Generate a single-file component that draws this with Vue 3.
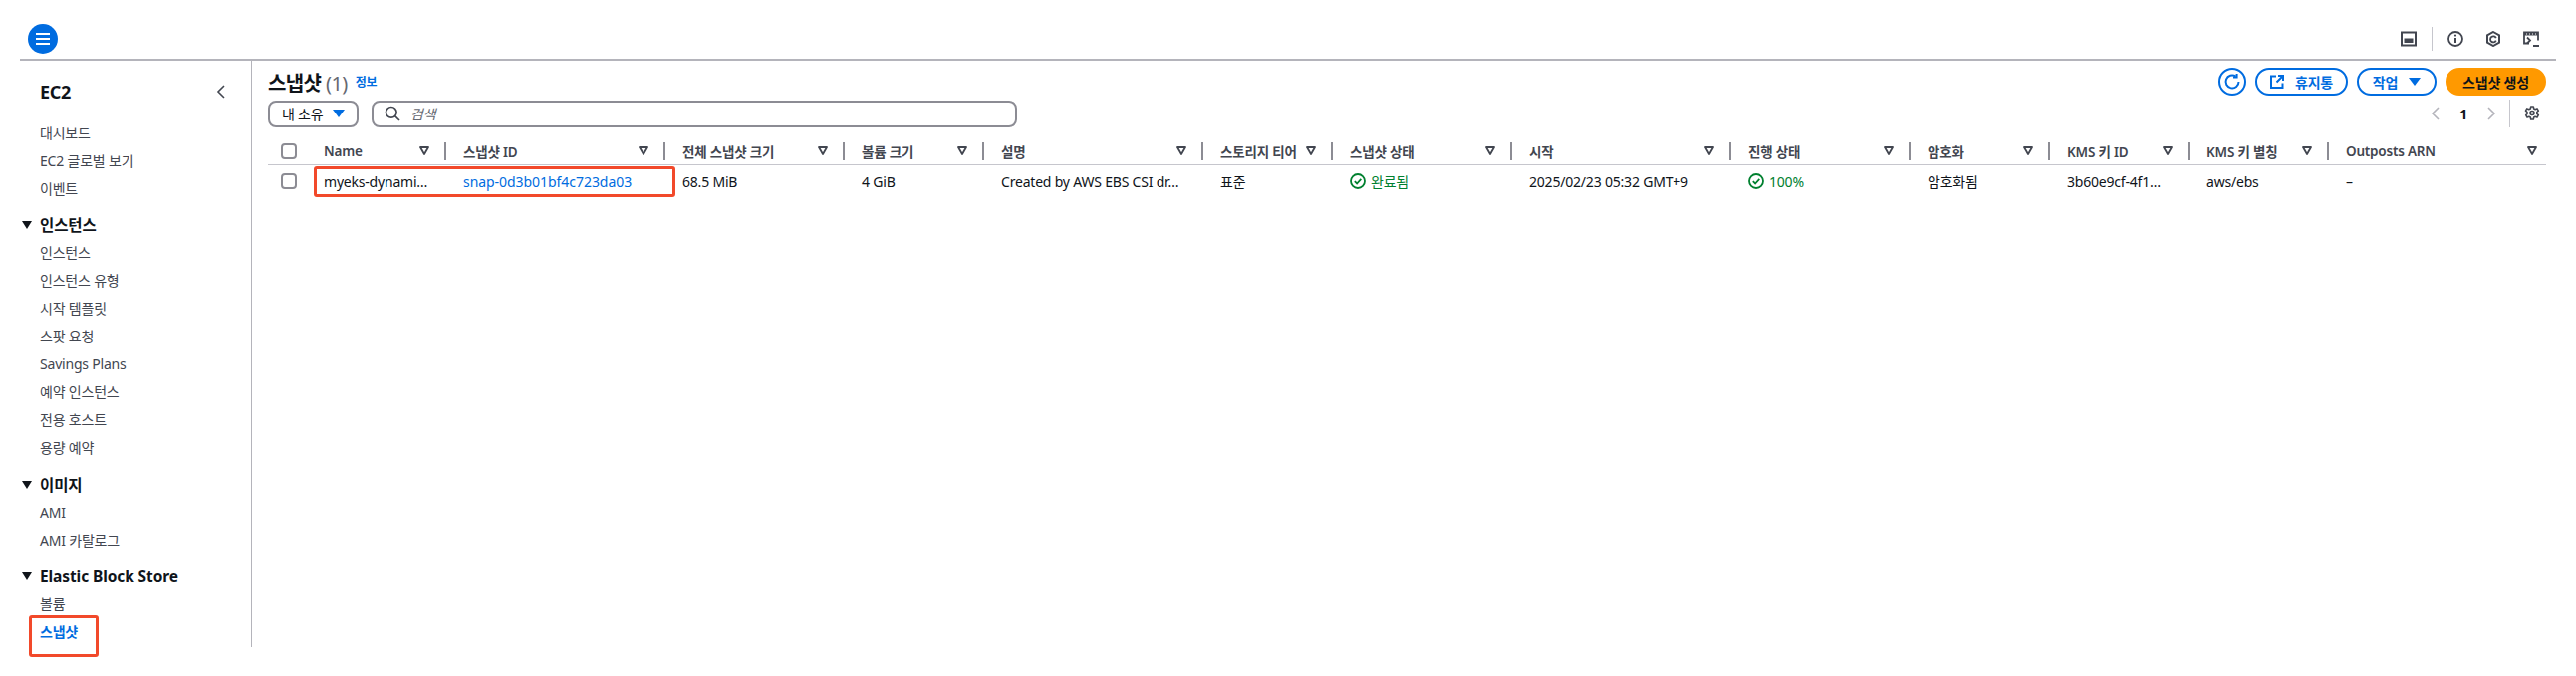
<script setup>
const navGroups = [
  { title: '인스턴스', items: ['인스턴스', '인스턴스 유형', '시작 템플릿', '스팟 요청', 'Savings Plans', '예약 인스턴스', '전용 호스트', '용량 예약'] },
  { title: '이미지', items: ['AMI', 'AMI 카탈로그'] },
  { title: 'Elastic Block Store', items: ['볼륨', '스냅샷'] },
]
const columns = ['Name', '스냅샷 ID', '전체 스냅샷 크기', '볼륨 크기', '설명', '스토리지 티어', '스냅샷 상태', '시작', '진행 상태', '암호화', 'KMS 키 ID', 'KMS 키 별칭', 'Outposts ARN']
</script>

<template>
  <div class="page">
    <header class="topbar">
      <button class="menu-btn" aria-label="menu">
        <svg width="16" height="14" viewBox="0 0 16 14"><path d="M1 2h14M1 7h14M1 12h14" stroke="#fff" stroke-width="2" fill="none"/></svg>
      </button>
      <div class="top-icons">
        <svg class="ti first" width="16" height="16" viewBox="0 0 16 16"><rect x="1" y="1.5" width="14" height="13" fill="none" stroke="#424650" stroke-width="2"/><rect x="3.5" y="7.5" width="9" height="4.5" fill="#424650"/></svg>
        <span class="top-sep"></span>
        <svg class="ti" width="16" height="16" viewBox="0 0 16 16"><circle cx="8" cy="8" r="7" fill="none" stroke="#424650" stroke-width="1.8"/><path d="M8 7v5" stroke="#424650" stroke-width="2"/><circle cx="8" cy="4.6" r="1.1" fill="#424650"/></svg>
        <svg class="ti" width="16" height="16" viewBox="0 0 16 16"><path d="M8 1l6 3.4v7.2L8 15l-6-3.4V4.4z" fill="none" stroke="#424650" stroke-width="2"/><path d="M10.8 7.2A3 3 0 1 0 10.8 9.6" fill="none" stroke="#424650" stroke-width="1.8"/></svg>
        <svg class="ti" width="16" height="16" viewBox="0 0 16 16"><path d="M6 12.5H1v-11h14v8" fill="none" stroke="#424650" stroke-width="1.8"/><path d="M1 1.5h14v3H1z" fill="#424650"/><path d="M3 3h1M6 3h1M9 3h1M12 3h1" stroke="#fff" stroke-width="1"/><path d="M4 6.5l3 3-3 3M10 15h6" fill="none" stroke="#424650" stroke-width="1.8"/></svg>
      </div>
    </header>

    <div class="body">
      <aside class="sidebar">
        <div class="side-head">
          <span class="side-title">EC2</span>
          <svg width="10" height="14" viewBox="0 0 10 14"><path d="M8 1L2 7l6 6" fill="none" stroke="#424650" stroke-width="1.6"/></svg>
        </div>
        <a class="nav-item">대시보드</a>
        <a class="nav-item">EC2 글로벌 보기</a>
        <a class="nav-item">이벤트</a>
        <section v-for="g in navGroups" :key="g.title" class="nav-group">
          <div class="group-title"><span class="tri"></span>{{ g.title }}</div>
          <a v-for="it in g.items" :key="it" class="nav-item" :class="{ active: g.title === 'Elastic Block Store' && it === '스냅샷' }">{{ it }}</a>
        </section>
        <div class="mark mark-nav"></div>
      </aside>

      <main class="main">
        <div class="toolbar">
          <div class="title-row">
            <h1>스냅샷 <span class="count">(1)</span></h1>
            <a class="info">정보</a>
          </div>
          <div class="actions">
            <button class="btn round" aria-label="refresh">
              <svg width="18" height="18" viewBox="0 0 18 18"><path d="M15.5 9A6.5 6.5 0 1 1 12.6 3.6" fill="none" stroke="#006ce0" stroke-width="2"/><path d="M13.6 1v3.6H10" fill="none" stroke="#006ce0" stroke-width="2"/></svg>
            </button>
            <button class="btn trash">
              <svg width="14" height="14" viewBox="0 0 14 14"><path d="M6 1.5H1v11.5h11.5V8.5" fill="none" stroke="#006ce0" stroke-width="2"/><path d="M8 1h5v5M13 1L6.5 7.5" fill="none" stroke="#006ce0" stroke-width="2"/></svg>
              <span>휴지통</span>
            </button>
            <button class="btn act"><span>작업</span><span class="caret blue"></span></button>
            <button class="btn primary">스냅샷 생성</button>
          </div>
        </div>

        <div class="filter-row">
          <button class="select">내 소유<span class="caret blue"></span></button>
          <div class="search">
            <svg width="16" height="16" viewBox="0 0 16 16"><circle cx="6.8" cy="6.8" r="5.3" fill="none" stroke="#424650" stroke-width="1.7"/><path d="M10.6 10.6L15 15" stroke="#424650" stroke-width="1.7"/></svg>
            <span>검색</span>
          </div>
          <div class="pager">
            <svg width="10" height="14" viewBox="0 0 10 14"><path d="M8 1L2 7l6 6" fill="none" stroke="#b4b4bb" stroke-width="1.6"/></svg>
            <b>1</b>
            <svg width="10" height="14" viewBox="0 0 10 14"><path d="M2 1l6 6-6 6" fill="none" stroke="#b4b4bb" stroke-width="1.6"/></svg>
            <span class="pager-sep"></span>
            <svg width="16" height="16" viewBox="0 0 16 16"><path d="M6.7 1h2.6l.4 2 1.4.7 1.9-.8 1.3 2.2-1.5 1.4v1.9l1.5 1.3-1.3 2.3-1.9-.8-1.4.8-.4 2H6.7l-.4-2-1.4-.8-1.9.8-1.3-2.3L3 8.4V6.5L1.5 5.1l1.3-2.2 1.9.8 1.6-.7z" fill="none" stroke="#424650" stroke-width="1.6" stroke-linejoin="round"/><circle cx="8" cy="7.5" r="2" fill="none" stroke="#424650" stroke-width="1.6"/></svg>
          </div>
        </div>

        <div class="table">
          <div class="thead">
            <div class="cell-check"><span class="check"></span><span class="check-sep"></span></div>
            <div v-for="(c, i) in columns" :key="c" class="th">
              <div class="th-inner" :class="{ last: i === columns.length - 1 }">
                <span>{{ c }}</span>
                <svg width="10" height="9" viewBox="0 0 10 9"><path d="M1 1h8L5 8z" fill="none" stroke="#424650" stroke-width="1.8" stroke-linejoin="round"/></svg>
              </div>
            </div>
          </div>
          <div class="trow">
            <div class="cell-check"><span class="check"></span></div>
            <div class="td">myeks-dynami…</div>
            <div class="td"><a class="link">snap-0d3b01bf4c723da03</a></div>
            <div class="td">68.5 MiB</div>
            <div class="td">4 GiB</div>
            <div class="td">Created by AWS EBS CSI dr…</div>
            <div class="td">표준</div>
            <div class="td ok">
              <svg width="16" height="16" viewBox="0 0 16 16"><circle cx="8" cy="8" r="7" fill="none" stroke="#00802f" stroke-width="1.8"/><path d="M4.8 8.2l2.3 2.3 4.2-4.6" fill="none" stroke="#00802f" stroke-width="1.8"/></svg>
              <span>완료됨</span>
            </div>
            <div class="td">2025/02/23 05:32 GMT+9</div>
            <div class="td ok">
              <svg width="16" height="16" viewBox="0 0 16 16"><circle cx="8" cy="8" r="7" fill="none" stroke="#00802f" stroke-width="1.8"/><path d="M4.8 8.2l2.3 2.3 4.2-4.6" fill="none" stroke="#00802f" stroke-width="1.8"/></svg>
              <span>100%</span>
            </div>
            <div class="td">암호화됨</div>
            <div class="td">3b60e9cf-4f1…</div>
            <div class="td">aws/ebs</div>
            <div class="td">–</div>
          </div>
          <div class="mark mark-row"></div>
        </div>
      </main>
    </div>
  </div>
</template>

<style>
html, body { margin: 0; background: #fff; }
</style>

<style scoped>
.page {
  width: 2586px;
  height: 679px;
  overflow: hidden;
  font-family: "Noto Sans", "Noto Sans CJK KR", sans-serif;
  font-size: 14px;
  color: #0f141a;
  letter-spacing: -0.2px;
}
.topbar {
  margin: 0 20px;
  height: 59px;
  border-bottom: 2px solid #b4b4bb;
  box-sizing: content-box;
  display: flex;
  align-items: flex-start;
  justify-content: space-between;
}
.menu-btn {
  margin: 24px 0 0 8px;
  width: 30px;
  height: 30px;
  border: 0;
  padding: 0;
  border-radius: 50%;
  background: #006ce0;
  display: flex;
  align-items: center;
  justify-content: center;
}
.top-icons {
  display: flex;
  align-items: center;
  margin: 27px 17px 0 0;
  height: 24px;
}
.ti { margin-right: 22px; }
.ti:last-child { margin-right: 0; }
.ti.first { margin-right: 15px; }
.top-sep { width: 1px; height: 24px; background: #c6c6cd; margin-right: 15px; }
.body { display: flex; align-items: flex-start; }
.sidebar {
  position: relative;
  box-sizing: border-box;
  width: 253px;
  height: 589px;
  padding-left: 40px;
  border-right: 1px solid #b4b4bb;
  flex: none;
}
.side-head {
  height: 28px;
  margin: 17px 25px 14px 0;
  display: flex;
  justify-content: space-between;
  align-items: center;
}
.side-title { font-size: 18px; font-weight: 700; letter-spacing: -0.3px; }
.nav-item {
  display: block;
  height: 28px;
  line-height: 28px;
  color: #424650;
}
.nav-item.active { color: #006ce0; font-weight: 700; }
.nav-group { margin-top: 8px; }
.nav-group:nth-of-type(2) { margin-top: 9px; }
.group-title {
  position: relative;
  height: 28px;
  line-height: 28px;
  font-weight: 700;
  font-size: 15.5px;
  letter-spacing: -0.1px;
}
.tri {
  position: absolute;
  left: -18px;
  top: 10px;
  width: 0;
  height: 0;
  border-left: 5px solid transparent;
  border-right: 5px solid transparent;
  border-top: 8px solid #0f141a;
}
.mark {
  position: absolute;
  box-sizing: border-box;
  border: 3px solid #f2492a;
  border-radius: 3px;
  pointer-events: none;
}
.mark-nav { left: 29px; top: 557px; width: 70px; height: 42px; }
.main { flex: 1; padding: 7px 30px 0 16px; min-width: 0; }
.toolbar { display: flex; justify-content: space-between; align-items: flex-start; height: 32px; }
.title-row { display: flex; align-items: center; height: 28px; }
h1 { margin: 0; font-size: 20px; font-weight: 700; letter-spacing: -0.6px; }
.count { font-weight: 400; color: #656871; }
.info { margin-left: 8px; font-size: 12px; font-weight: 600; color: #006ce0; }
.actions { display: flex; gap: 9px; }
.btn {
  box-sizing: border-box;
  height: 28px;
  margin: 0;
  border: 2px solid #006ce0;
  border-radius: 14px;
  background: #fff;
  color: #006ce0;
  font: inherit;
  font-weight: 700;
  letter-spacing: inherit;
  padding: 0;
  display: flex;
  align-items: center;
  justify-content: center;
}
.round { width: 28px; }
.trash { width: 93px; gap: 11px; }
.act { width: 80px; gap: 11px; }
.primary { width: 101px; background: #ff9900; border-color: #ff9900; color: #0f141a; }
.caret {
  width: 0;
  height: 0;
  border-left: 6px solid transparent;
  border-right: 6px solid transparent;
  border-top: 8px solid #0f141a;
}
.caret.blue { border-top-color: #006ce0; }
.filter-row { display: flex; align-items: center; height: 28px; margin-top: 0; }
.select {
  box-sizing: border-box;
  width: 91px;
  height: 27px;
  border: 2px solid #8c8c94;
  border-radius: 8px;
  background: #fff;
  font: inherit;
  letter-spacing: inherit;
  color: #0f141a;
  padding: 0 0 0 12px;
  display: flex;
  align-items: center;
  gap: 10px;
}
.search {
  box-sizing: border-box;
  margin-left: 13px;
  width: 648px;
  height: 27px;
  border: 2px solid #8c8c94;
  border-radius: 8px;
  padding-left: 11px;
  display: flex;
  align-items: center;
  gap: 10px;
  color: #656871;
  font-style: italic;
}
.pager { margin-left: auto; margin-right: 6px; display: flex; align-items: center; }
.pager b { margin: 0 19px; font-size: 14px; }
.pager-sep { width: 1px; height: 28px; background: #c6c6cd; margin: 0 14px 0 13px; }
.table { position: relative; margin-top: 10px; }
.thead, .trow {
  display: grid;
  grid-template-columns: 39px 140px 220px 180px 140px 220px 130px 180px 220px 180px 140px 140px 140px 218px;
  align-items: center;
}
.thead { height: 27px; border-bottom: 1.5px solid #c6c6cd; box-sizing: content-box; }
.trow { height: 32px; }
.cell-check { display: flex; align-items: center; padding-left: 13px; height: 18px; }
.check {
  box-sizing: border-box;
  width: 16px;
  height: 16px;
  border: 2px solid #8c8c94;
  border-radius: 4px;
  flex: none;
}
.check-sep { width: 1px; height: 18px; background: #c6c6cd; margin-left: 10px; }
.th-inner {
  box-sizing: border-box;
  height: 18px;
  padding: 0 15px 0 17px;
  border-right: 2px solid #8c8c94;
  display: flex;
  justify-content: space-between;
  align-items: center;
  font-weight: 600;
  color: #424650;
  font-size: 13.5px;
  white-space: nowrap;
}
.th-inner.last { border-right: 0; padding-right: 9px; }
.td {
  padding-left: 17px;
  white-space: nowrap;
  display: flex;
  align-items: center;
  gap: 5px;
}
.link { color: #006ce0; letter-spacing: -0.05px; }
.ok { color: #00802f; }
.mark-row { left: 46px; top: 29px; width: 363px; height: 31px; }
</style>
